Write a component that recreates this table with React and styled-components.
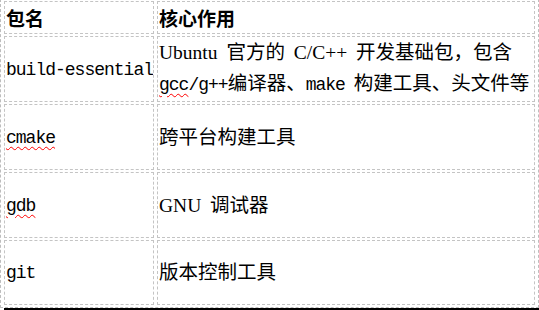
import React from 'react';
import styled, { createGlobalStyle } from 'styled-components';

const GlobalStyle = createGlobalStyle`
  html, body {
    margin: 0;
    padding: 0;
    background: #ffffff;
  }
  body {
    width: 539px;
    height: 310px;
    overflow: hidden;
    font-family: "Liberation Serif", "Noto Sans CJK SC", serif;
    color: #000000;
  }
`;

const Page = styled.div`
  width: 539px;
`;

const Table = styled.table`
  margin-top: -1px;
  width: 539px;
  table-layout: fixed;
  border-collapse: separate;
  border-spacing: 3px 2px;
  border: 1px dashed #bdbdbd;
  border-top: none;
  box-sizing: border-box;
`;

const Cell = styled.td`
  box-sizing: border-box;
  height: ${(p) => p.$h}px;
  padding: 0 1px;
  border: 1px dashed #c4c4c4;
  vertical-align: middle;
  font-size: 19.5px;
  line-height: 31px;
  word-spacing: 4px;
  white-space: nowrap;
  overflow: hidden;
`;

const HeadCell = styled(Cell).attrs({ as: 'th' })`
  text-align: left;
  font-family: "Noto Sans CJK SC", sans-serif;
  font-weight: 700;
  font-size: 19px;
  line-height: 24px;
`;

const Code = styled.span`
  font-family: "Liberation Mono", "Noto Sans CJK SC", monospace;
  font-size: 18px;
  letter-spacing: -1px;
  word-spacing: 0;
  text-decoration: ${(p) => (p.$typo ? 'underline wavy #ff0000' : 'none')};
  text-decoration-thickness: 1px;
  text-underline-offset: 3px;
`;

const Rule = styled.div`
  margin-left: 4px;
  height: 2px;
  background: #000000;
`;

const App = () => {
  const rows = [
    {
      name: 'build-essential',
      desc: (
        <>
          Ubuntu 官方的 C/C++ 开发基础包，包含
          <br />
          <Code $typo>gcc</Code>
          <Code>/g++</Code>编译器、<Code>make</Code> 构建工具、头文件等
        </>
      ),
      height: 66,
    },
    { name: 'cmake', typo: true, desc: '跨平台构建工具', height: 66 },
    { name: 'gdb', typo: true, desc: 'GNU 调试器', height: 66 },
    { name: 'git', desc: '版本控制工具', height: 65 },
  ];

  return (
    <Page>
      <GlobalStyle />
      <Table>
        <colgroup>
          <col style={{ width: 150 }} />
          <col style={{ width: 378 }} />
        </colgroup>
        <thead>
          <tr>
            <HeadCell $h={33}>包名</HeadCell>
            <HeadCell $h={33}>核心作用</HeadCell>
          </tr>
        </thead>
        <tbody>
          {rows.map((r) => (
            <tr key={r.name}>
              <Cell $h={r.height}>
                <Code $typo={r.typo}>{r.name}</Code>
              </Cell>
              <Cell $h={r.height}>{r.desc}</Cell>
            </tr>
          ))}
        </tbody>
      </Table>
      <Rule />
    </Page>
  );
};

export default App;
